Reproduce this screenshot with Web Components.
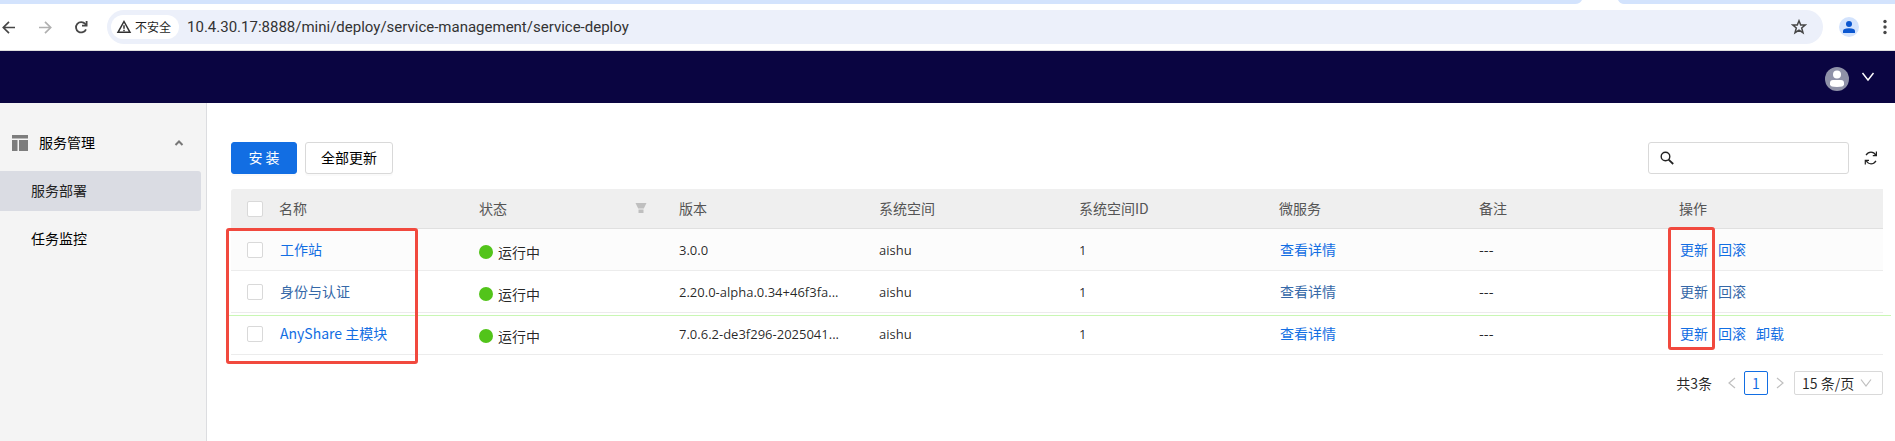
<!DOCTYPE html>
<html lang="zh-CN">
<head>
<meta charset="utf-8">
<title>服务部署</title>
<style>
  body {
    margin: 0;
    font-family: 'Noto Sans CJK SC', 'Noto Sans', sans-serif;
    font-size: 14px;
    line-height: 22px;
    color: rgba(0, 0, 0, 0.85);
    background: #fff;
  }
</style>
</head>
<body>
<deploy-page>
  <browser-bar slot="browser" address="10.4.30.17:8888/mini/deploy/service-management/service-deploy"></browser-bar>
  <app-header slot="header"></app-header>
  <side-menu slot="menu" title="服务管理">
    <menu-entry active>服务部署</menu-entry>
    <menu-entry>任务监控</menu-entry>
  </side-menu>
  <service-toolbar></service-toolbar>
  <service-table></service-table>
  <page-pager total="3"></page-pager>
</deploy-page>

<script>
class DeployPage extends HTMLElement {
  shadowRoot = this.attachShadow({ mode: 'open' });

  connectedCallback() {
    this.shadowRoot.innerHTML = `
      <style>
        :host {
          display: flex;
          flex-direction: column;
          min-height: 100vh;
        }

        .page__body {
          display: flex;
          flex: 1;
        }

        main {
          flex: 1;
          min-width: 0;
          padding: 39px 12px 0 24px;
        }
      </style>
      <slot name="browser"></slot>
      <slot name="header"></slot>
      <div class="page__body">
        <slot name="menu"></slot>
        <main><slot></slot></main>
      </div>
    `;
  }
}

class BrowserBar extends HTMLElement {
  shadowRoot = this.attachShadow({ mode: 'open' });

  connectedCallback() {
    const address = this.getAttribute('address') || '';

    this.shadowRoot.innerHTML = `
      <style>
        :host {
          display: block;
          border-bottom: 1px solid #dedede;
        }

        .tabs {
          display: flex;
          justify-content: flex-end;
          height: 4px;
          padding-right: 271px;
          background: #d3e3fd;
        }

        .bar {
          display: flex;
          align-items: center;
          height: 46px;
          padding-right: 4px;
          gap: 16px;
        }

        .nav {
          display: flex;
          gap: 16px;
          width: 91px;
        }

        button {
          display: flex;
          padding: 0;
          border: none;
          background: none;
          color: #474747;
        }

        button:disabled {
          color: #b0b0b0;
        }

        .nav button {
          width: 20px;
        }

        .address {
          display: flex;
          flex: 1;
          align-items: center;
          gap: 8px;
          height: 34px;
          padding: 0 16px 0 4px;
          box-sizing: border-box;
          border-radius: 17px;
          background: #ecf0fa;
        }

        .address__chip {
          display: flex;
          align-items: center;
          gap: 3px;
          height: 24px;
          padding: 0 8px 0 5px;
          border-radius: 12px;
          background: #fff;
          color: #1f1f1f;
          font-size: 12px;
        }

        input {
          flex: 1;
          min-width: 0;
          padding: 0 0 1px;
          border: none;
          outline: none;
          background: none;
          font: 15px Roboto, 'Noto Sans CJK SC', sans-serif;
          color: #333;
        }

        .actions {
          display: flex;
          align-items: center;
          gap: 20px;
        }
      </style>
      <div class="tabs">
        <svg width="49" height="4" viewBox="0 0 49 4"><path d="M0 4Q5 4 7 0H43Q45 4 49 4Z" fill="#fff"/></svg>
      </div>
      <div class="bar">
        <div class="nav">
          <button aria-label="后退"><svg width="20" height="20" viewBox="0 0 20 20" fill="none" stroke="currentColor" stroke-width="1.7"><path d="M15 10.500H3.500M9 4.800L3.300 10.500L9 16.200"/></svg></button>
          <button aria-label="前进" disabled><svg width="20" height="20" viewBox="0 0 20 20" fill="none" stroke="currentColor" stroke-width="1.700"><path d="M3 10.500H14.500M9 4.800L14.700 10.500L9 16.200"/></svg></button>
          <button aria-label="刷新"><svg width="20" height="20" viewBox="0 0 20 20" fill="none" stroke="currentColor" stroke-width="1.800"><path d="M14 12.300A5.200 5.200 0 1 1 13.200 6.900L14.500 8.200"/><path d="M14.600 4V8.600H10"/></svg></button>
        </div>
        <div class="address">
          <span class="address__chip">
            <svg width="16" height="16" viewBox="0 0 16 16" fill="none" stroke="#333" stroke-width="1.500"><path d="M8 2.500L14 13.300H2Z"/><path d="M8 6.300V9.800M8 10.700V12.200"/></svg>
            不安全
          </span>
          <input aria-label="地址" value="${address}" spellcheck="false">
          <button aria-label="收藏"><svg width="16" height="16" viewBox="0 0 16 16" fill="none" stroke="currentColor" stroke-width="1.500"><path d="M8 1.800L9.700 6H14.200L10.700 8.900L12 13.700L8 11.100L4 13.700L5.300 8.900L1.800 6H6.300Z"/></svg></button>
        </div>
        <div class="actions">
          <button aria-label="个人资料"><svg width="20" height="20" viewBox="0 0 20 20"><circle cx="10" cy="10" r="10" fill="#d3e3fd"/><circle cx="10" cy="7" r="3" fill="#0b57d0"/><path d="M4 16V14Q4 11.300 10 11.300T16 14V16Z" fill="#0b57d0"/></svg></button>
          <button aria-label="菜单"><svg width="12" height="20" viewBox="0 0 12 20" fill="currentColor"><circle cx="6" cy="4.500" r="1.700"/><circle cx="6" cy="10" r="1.700"/><circle cx="6" cy="15.500" r="1.700"/></svg></button>
        </div>
      </div>
    `;
  }
}

class AppHeader extends HTMLElement {
  shadowRoot = this.attachShadow({ mode: 'open' });

  connectedCallback() {
    this.shadowRoot.innerHTML = `
      <style>
        :host {
          display: flex;
          align-items: center;
          justify-content: flex-end;
          height: 52px;
          padding-right: 20px;
          background: #0a0541;
        }

        button {
          display: flex;
          gap: 12px;
          padding: 4px 0 0;
          border: none;
          background: none;
        }
      </style>
      <button aria-label="账户">
        <svg width="24" height="24" viewBox="0 0 24 24"><circle cx="12" cy="12" r="12" fill="#8f92a8"/><circle cx="12" cy="7.500" r="4" fill="#fff"/><path d="M5 16Q5 13 8 13H16Q19 13 19 16V17.500Q19 20 12 20T5 17.500Z" fill="#fff"/></svg>
        <svg width="14" height="24" viewBox="0 0 14 24" fill="none" stroke="#fff" stroke-width="1.400"><path d="M1.500 6L7 13L12.500 6"/></svg>
      </button>
    `;
  }
}

class SideMenu extends HTMLElement {
  shadowRoot = this.attachShadow({ mode: 'open' });

  connectedCallback() {
    const title = this.getAttribute('title') || '';
    this.removeAttribute('title');

    this.shadowRoot.innerHTML = `
      <style>
        :host {
          display: block;
          width: 206px;
          padding-top: 20px;
          border-right: 1px solid #dcdde0;
          background: #f4f4f4;
        }

        .menu__title {
          display: flex;
          align-items: center;
          width: 100%;
          height: 40px;
          padding: 0 22px 0 12px;
          border: none;
          background: none;
          color: #000;
          font: inherit;
        }

        .menu__title span {
          flex: 1;
          margin-left: 11px;
          padding-bottom: 2px;
          text-align: left;
        }

        nav {
          display: flex;
          flex-direction: column;
          gap: 8px;
          padding: 8px 5px 0 0;
        }
      </style>
      <button class="menu__title" aria-expanded="true">
        <svg width="16" height="16" viewBox="0 0 16 16" fill="#7d7d7d"><path d="M0 0H16V3.500H0ZM0 5H5.500V16H0ZM7 5H16V16H7Z"/></svg>
        <span>${title}</span>
        <svg width="10" height="8" viewBox="0 0 10 8" fill="none" stroke="#777" stroke-width="2"><path d="M1.500 6L5 2.500L8.500 6"/></svg>
      </button>
      <nav><slot></slot></nav>
    `;
  }
}

class MenuEntry extends HTMLElement {
  shadowRoot = this.attachShadow({ mode: 'open' });

  connectedCallback() {
    this.shadowRoot.innerHTML = `
      <style>
        :host {
          display: block;
        }

        a {
          display: block;
          padding: 0 0 2px 31px;
          border-radius: 0 3px 3px 0;
          color: #000;
          line-height: 38px;
          text-decoration: none;
        }

        :host([active]) a {
          background: #dadce3;
          color: #222;
        }
      </style>
      <a href="#"><slot></slot></a>
    `;
  }
}

class ServiceToolbar extends HTMLElement {
  shadowRoot = this.attachShadow({ mode: 'open' });

  connectedCallback() {
    this.shadowRoot.innerHTML = `
      <style>
        :host {
          display: flex;
          align-items: center;
          gap: 8px;
          margin-bottom: 15px;
        }

        button {
          height: 32px;
          padding: 0 15px 2px;
          border: 1px solid #d9d9d9;
          border-radius: 3px;
          background: #fff;
          box-shadow: 0 2px 0 rgba(0, 0, 0, 0.02);
          color: #000;
          font: inherit;
        }

        .primary {
          min-width: 66px;
          border-color: #126ee3;
          background: #126ee3;
          color: #fff;
        }

        .search {
          display: flex;
          align-items: center;
          gap: 8px;
          box-sizing: border-box;
          width: 201px;
          height: 32px;
          margin-left: auto;
          padding: 0 11px;
          border: 1px solid #d9d9d9;
          border-radius: 3px;
        }

        input {
          flex: 1;
          min-width: 0;
          padding: 0;
          border: none;
          outline: none;
          font: inherit;
        }

        .refresh {
          display: flex;
          align-items: center;
          padding: 0 5px 0 7px;
          border: none;
          box-shadow: none;
        }
      </style>
      <button class="primary">安 装</button>
      <button>全部更新</button>
      <label class="search">
        <svg width="14" height="14" viewBox="0 0 14 14" fill="none" stroke="#222" stroke-width="1.400"><circle cx="5.500" cy="5.500" r="4.300"/><path d="M8.600 8.600L13.200 13" stroke-width="1.800"/></svg>
        <input type="text" aria-label="搜索">
      </label>
      <button class="refresh" aria-label="刷新列表">
        <svg width="14" height="14" viewBox="0 0 14 14" fill="none" stroke="#222" stroke-width="1.200"><path d="M2 4.200Q4 1.200 7 1.200T11.800 4.200M12.400 .4V4.700H8.800M12 9.800Q10 12.800 7 12.800T2.200 9.800M1.300 13.600V9.300H5"/></svg>
      </button>
    `;
  }
}

class ServiceTable extends HTMLElement {
  shadowRoot = this.attachShadow({ mode: 'open' });

  services = [
    { name: '工作站', version: '3.0.0', actions: ['更新', '回滚'] },
    { name: '身份与认证', version: '2.20.0-alpha.0.34+46f3fa...', actions: ['更新', '回滚'] },
    { name: 'AnyShare 主模块', version: '7.0.6.2-de3f296-2025041...', actions: ['更新', '回滚', '卸载'] },
  ];

  connectedCallback() {
    this.shadowRoot.innerHTML = `
      ${this.getStyles()}
      <table>
        <colgroup>
          <col class="check">
          <col span="7" class="data">
          <col>
        </colgroup>
        <thead>
          <tr>
            <th><input type="checkbox" aria-label="全选"></th>
            <th>名称</th>
            <th>
              <div class="filter">
                状态
                <button aria-label="筛选状态"><svg width="12" height="12" viewBox="0 0 12 12" fill="#bfbfbf"><path d="M.5 1H11.500L8.800 6.500H3.200ZM3.500 7.500H8.500V11H3.500Z"/></svg></button>
              </div>
            </th>
            <th>版本</th>
            <th>系统空间</th>
            <th>系统空间ID</th>
            <th>微服务</th>
            <th>备注</th>
            <th>操作</th>
          </tr>
        </thead>
        <tbody>${this.services.map((service) => this.getRow(service)).join('')}</tbody>
      </table>
      <div class="line"></div>
      <div class="mark mark--names"></div>
      <div class="mark mark--update"></div>
    `;
  }

  getRow({ name, version, actions }) {
    return `
      <tr>
        <td><input type="checkbox" aria-label="${name}"></td>
        <td><a href="#">${name}</a></td>
        <td><div class="status">运行中</div></td>
        <td class="latin">${version}</td>
        <td class="latin">aishu</td>
        <td class="latin">1</td>
        <td><a href="#">查看详情</a></td>
        <td>---</td>
        <td><div class="actions">${actions.map((action) => `<a href="#">${action}</a>`).join('')}</div></td>
      </tr>
    `;
  }

  getStyles() {
    return `
      <style>
        :host {
          display: block;
          position: relative;
        }

        table {
          width: 100%;
          table-layout: fixed;
          border-collapse: separate;
          border-spacing: 0;
        }

        .check {
          width: 40px;
        }

        .data {
          width: 200px;
        }

        th,
        td {
          box-sizing: border-box;
          padding: 0 8px 2px;
          border-bottom: 1px solid #ececec;
          text-align: left;
          white-space: nowrap;
        }

        th {
          height: 40px;
          border-color: #e0e0e0;
          background: #efefef;
          color: #555;
          font-weight: 400;
        }

        td {
          height: 42px;
        }

        th:first-child,
        td:first-child {
          padding: 0 8px 0 16px;
        }

        th:first-child {
          border-top-left-radius: 3px;
        }

        tbody tr:first-child {
          background: #fcfcfc;
        }

        .latin {
          padding-bottom: 0;
          font-family: 'Open Sans', 'Noto Sans', sans-serif;
          font-size: 13px;
        }

        input {
          display: block;
          appearance: none;
          box-sizing: border-box;
          width: 16px;
          height: 16px;
          margin: 0;
          border: 1px solid #d9d9d9;
          border-radius: 2px;
          background: #fff;
        }

        input:checked {
          background: #126ee3;
        }

        a {
          padding-left: 1px;
          color: #126ee3;
          text-decoration: none;
        }

        tbody tr:nth-child(2) a {
          color: #3568a8;
        }

        .filter {
          display: flex;
          align-items: center;
          justify-content: space-between;
          padding-right: 16px;
        }

        .filter button {
          display: flex;
          padding: 0;
          border: none;
          background: none;
        }

        .status {
          display: flex;
          align-items: center;
          gap: 5px;
          padding-top: 6px;
        }

        .status::before {
          content: '';
          width: 14px;
          height: 14px;
          border-radius: 50%;
          background: #52c41a;
        }

        .actions {
          display: flex;
          gap: 9px;
        }

        .line {
          position: absolute;
          top: 126px;
          left: -2px;
          right: -8px;
          height: 1px;
          background: #c9f7b4;
        }

        .mark {
          position: absolute;
          box-sizing: border-box;
          border: 3px solid #f1493e;
          border-radius: 3px;
          pointer-events: none;
        }

        .mark--names {
          top: 39px;
          left: -5px;
          width: 192px;
          height: 136px;
        }

        .mark--update {
          top: 38px;
          left: 1437px;
          width: 47px;
          height: 123px;
        }
      </style>
    `;
  }
}

class PagePager extends HTMLElement {
  shadowRoot = this.attachShadow({ mode: 'open' });

  connectedCallback() {
    const total = this.getAttribute('total') || '0';

    this.shadowRoot.innerHTML = `
      <style>
        :host {
          display: flex;
          align-items: center;
          justify-content: flex-end;
          margin-top: 16px;
        }

        .total {
          margin-right: 8px;
        }

        button {
          display: flex;
          align-items: center;
          justify-content: center;
          box-sizing: border-box;
          width: 24px;
          height: 24px;
          padding: 0;
          border: none;
          border-radius: 2px;
          background: #fff;
          font: inherit;
        }

        button[aria-current] {
          border: 1px solid #126ee3;
          color: #126ee3;
        }

        .size {
          display: grid;
          align-items: center;
          margin-left: 2px;
        }

        .size > * {
          grid-area: 1 / 1;
        }

        .size svg {
          justify-self: end;
          margin-right: 11px;
          pointer-events: none;
        }

        select {
          appearance: none;
          box-sizing: border-box;
          width: 89px;
          height: 24px;
          padding: 0 7px;
          border: 1px solid #d9d9d9;
          border-radius: 2px;
          background: #fff;
          color: inherit;
          font: inherit;
        }
      </style>
      <span class="total">共${total}条</span>
      <button aria-label="上一页"><svg width="8" height="12" viewBox="0 0 8 12" fill="none" stroke="#bfbfbf" stroke-width="1.200"><path d="M7 1L1 6L7 11"/></svg></button>
      <button aria-current="page">1</button>
      <button aria-label="下一页"><svg width="8" height="12" viewBox="0 0 8 12" fill="none" stroke="#bfbfbf" stroke-width="1.200"><path d="M1 1L7 6L1 11"/></svg></button>
      <div class="size">
        <select aria-label="每页条数">
          <option>15 条/页</option>
          <option>30 条/页</option>
          <option>50 条/页</option>
        </select>
        <svg width="12" height="10" viewBox="0 0 12 10" fill="none" stroke="#bfbfbf" stroke-width="1.200"><path d="M1 1.500L6 8L11 1.500"/></svg>
      </div>
    `;
  }
}

customElements.define('deploy-page', DeployPage);
customElements.define('browser-bar', BrowserBar);
customElements.define('app-header', AppHeader);
customElements.define('side-menu', SideMenu);
customElements.define('menu-entry', MenuEntry);
customElements.define('service-toolbar', ServiceToolbar);
customElements.define('service-table', ServiceTable);
customElements.define('page-pager', PagePager);
</script>
</body>
</html>
